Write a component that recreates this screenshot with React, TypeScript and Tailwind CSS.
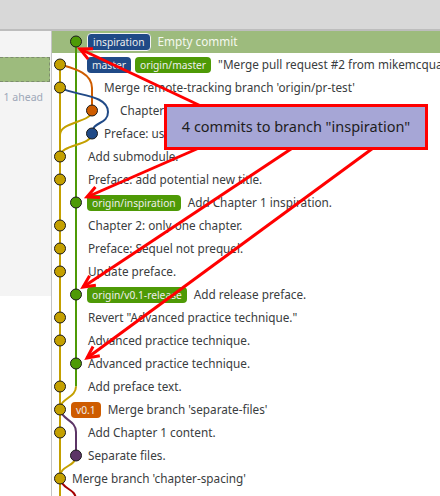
type Row = {
  indent: string;
  text: string;
  badges?: { label: string; color: string; current?: boolean }[];
};

const blue = '#204a87';
const green = '#4e9a06';
const yellow = '#c4a000';
const orange = '#ce5c00';
const plum = '#5c3566';
const scarlet = '#a40000';

const rows: Row[] = [
  { indent: 'pl-[35px]', text: 'Empty commit', badges: [{ label: 'inspiration', color: 'bg-[#204a87]', current: true }] },
  {
    indent: 'pl-[35px]',
    text: '"Merge pull request #2 from mikemcquaid/pr-test"',
    badges: [
      { label: 'master', color: 'bg-[#204a87]' },
      { label: 'origin/master', color: 'bg-[#4e9a06]' },
    ],
  },
  { indent: 'pl-[52px]', text: "Merge remote-tracking branch 'origin/pr-test'" },
  { indent: 'pl-[68px]', text: 'Chapter 2: split out the chapters.' },
  { indent: 'pl-[52px]', text: 'Preface: use the new title.' },
  { indent: 'pl-[36px]', text: 'Add submodule.' },
  { indent: 'pl-[36px]', text: 'Preface: add potential new title.' },
  { indent: 'pl-[35px]', text: 'Add Chapter 1 inspiration.', badges: [{ label: 'origin/inspiration', color: 'bg-[#4e9a06]' }] },
  { indent: 'pl-[36px]', text: 'Chapter 2: only one chapter.' },
  { indent: 'pl-[36px]', text: 'Preface: Sequel not prequel.' },
  { indent: 'pl-[36px]', text: 'Update preface.' },
  { indent: 'pl-[35px]', text: 'Add release preface.', badges: [{ label: 'origin/v0.1-release', color: 'bg-[#4e9a06]' }] },
  { indent: 'pl-[36px]', text: 'Revert "Advanced practice technique."' },
  { indent: 'pl-[36px]', text: 'Advanced practice technique.' },
  { indent: 'pl-[36px]', text: 'Advanced practice technique.' },
  { indent: 'pl-[36px]', text: 'Add preface text.' },
  { indent: 'pl-[19px]', text: "Merge branch 'separate-files'", badges: [{ label: 'v0.1', color: 'bg-[#ce5c00]' }] },
  { indent: 'pl-[36px]', text: 'Add Chapter 1 content.' },
  { indent: 'pl-[36px]', text: 'Separate files.' },
  { indent: 'pl-[20px]', text: "Merge branch 'chapter-spacing'" },
];

const lanes = [60, 76, 92, 108];
const rowY = (k: number) => (k === 0 ? 41.5 : 64.5 + 23 * (k - 1));

// [row, lane, colour]
const nodes: [number, number, string][] = [
  [0, 1, green], [1, 0, yellow], [2, 0, yellow], [3, 2, orange], [4, 2, blue],
  [5, 0, yellow], [6, 0, yellow], [7, 1, green], [8, 0, yellow], [9, 0, yellow],
  [10, 0, yellow], [11, 1, green], [12, 0, yellow], [13, 0, yellow], [14, 1, green],
  [15, 0, yellow], [16, 0, yellow], [17, 0, yellow], [18, 1, plum], [19, 0, yellow],
];

const edges: [string, string][] = [
  ['M60 64.5 V 500', yellow],
  ['M76 41.5 V 386.5', green],
  ['M76 386.5 C76 398, 60 398, 60 409.5', yellow],
  ['M60 64.5 C72 68, 92 72, 92 88 V 110.5', orange],
  ['M60 87.5 C74 96, 108 94, 108 112 C108 125, 92 121, 92 133.5', blue],
  ['M92 110.5 C92 123, 60 121, 60 135', yellow],
  ['M92 133.5 C92 146, 60 144, 60 156.5', yellow],
  ['M60 409.5 C62 420, 76 420, 76 432 V 455.5', plum],
  ['M76 455.5 C76 467, 60 465, 60 477', yellow],
  ['M60 478.5 C62 490, 76 488, 76 500', scarlet],
];

function Graph() {
  return (
    <svg className="absolute inset-0 pointer-events-none" width="388" height="465">
      <g transform="translate(-52 -31)">
        {edges.map(([d, c], i) => (
          <path key={i} d={d} fill="none" stroke={c} strokeWidth="2" />
        ))}
        {nodes.map(([r, l, c], i) => (
          <circle key={i} cx={lanes[l]} cy={rowY(r)} r="5.5" fill={c} stroke="#1c1c1c" strokeWidth="1" />
        ))}
      </g>
    </svg>
  );
}

// arrows from the note box to the four commits
const arrows: [number, number, number, number][] = [
  [220, 115, 80, 49],
  [215, 141, 87, 197],
  [300, 143, 83, 287],
  [380, 143, 87, 358],
];

function Arrows() {
  return (
    <svg className="absolute inset-0 pointer-events-none" width="440" height="496">
      {arrows.map(([x1, y1, x2, y2], i) => {
        const len = Math.hypot(x2 - x1, y2 - y1);
        const ux = (x2 - x1) / len;
        const uy = (y2 - y1) / len;
        const a = (26 * Math.PI) / 180;
        const h = 13;
        const ax = x2 - h * (ux * Math.cos(a) - uy * Math.sin(a));
        const ay = y2 - h * (uy * Math.cos(a) + ux * Math.sin(a));
        const bx = x2 - h * (ux * Math.cos(a) + uy * Math.sin(a));
        const by = y2 - h * (uy * Math.cos(a) - ux * Math.sin(a));
        return (
          <g key={i} stroke="#ff0000" strokeWidth="3" fill="none">
            <line x1={x1} y1={y1} x2={x2} y2={y2} />
            <polyline points={`${ax},${ay} ${x2},${y2} ${bx},${by}`} />
          </g>
        );
      })}
    </svg>
  );
}

export default function App() {
  return (
    <div className="relative w-[440px] h-[496px] overflow-hidden bg-white font-['Noto_Sans',sans-serif]">
      <div className="h-[31px] bg-[#d8d8d8] border-b-2 border-[#bdbdbd]" />

      <div className="flex h-[465px]">
        <div className="w-[52px] border-r border-[#c4c4c4] flex flex-col">
          <div className="h-[265px] bg-[#f4f4f4]">
            <div className="mt-[26px] w-[50px] h-[25px] bg-[#9dbb7d] border-y border-r border-dashed border-[#7d8d6e]" />
            <div className="mt-[7px] pr-[8px] text-right text-[10.5px] leading-[16px] text-[#9ea8b8] whitespace-nowrap">
              1 ahead
            </div>
          </div>
        </div>

        <div className="relative flex-1 overflow-hidden">
          {rows.map((row, i) => (
            <div
              key={i}
              className={`flex items-center whitespace-nowrap text-[11.75px] ${row.indent} ${
                i === 0 ? 'h-[22px] bg-[#9dbb7d] text-[#f4f8ee]' : 'h-[23px] text-[#3a3d40]'
              }`}
            >
              {row.badges && (
                <div className="flex items-center gap-[4px] mr-[7px]">
                  {row.badges.map((b) => (
                    <span
                      key={b.label}
                      className={`${b.color} rounded-[4px] px-[5px] text-[10.25px] text-[#eeeeec] ${
                        b.current ? 'h-[18px] leading-[16px] border border-[#f2f2f2]' : 'h-[16px] leading-[16px]'
                      }`}
                    >
                      {b.label}
                    </span>
                  ))}
                </div>
              )}
              <span>{row.text}</span>
            </div>
          ))}
          <Graph />
        </div>
      </div>

      <Arrows />

      <div className="absolute left-[164px] top-[104px] w-[264px] h-[46px] bg-[#a6a6d6] border-[3px] border-[#ff0000] flex items-center justify-center text-[14.5px] text-[#1e1e1e] whitespace-nowrap">
        4 commits to branch "inspiration"
      </div>
    </div>
  );
}
